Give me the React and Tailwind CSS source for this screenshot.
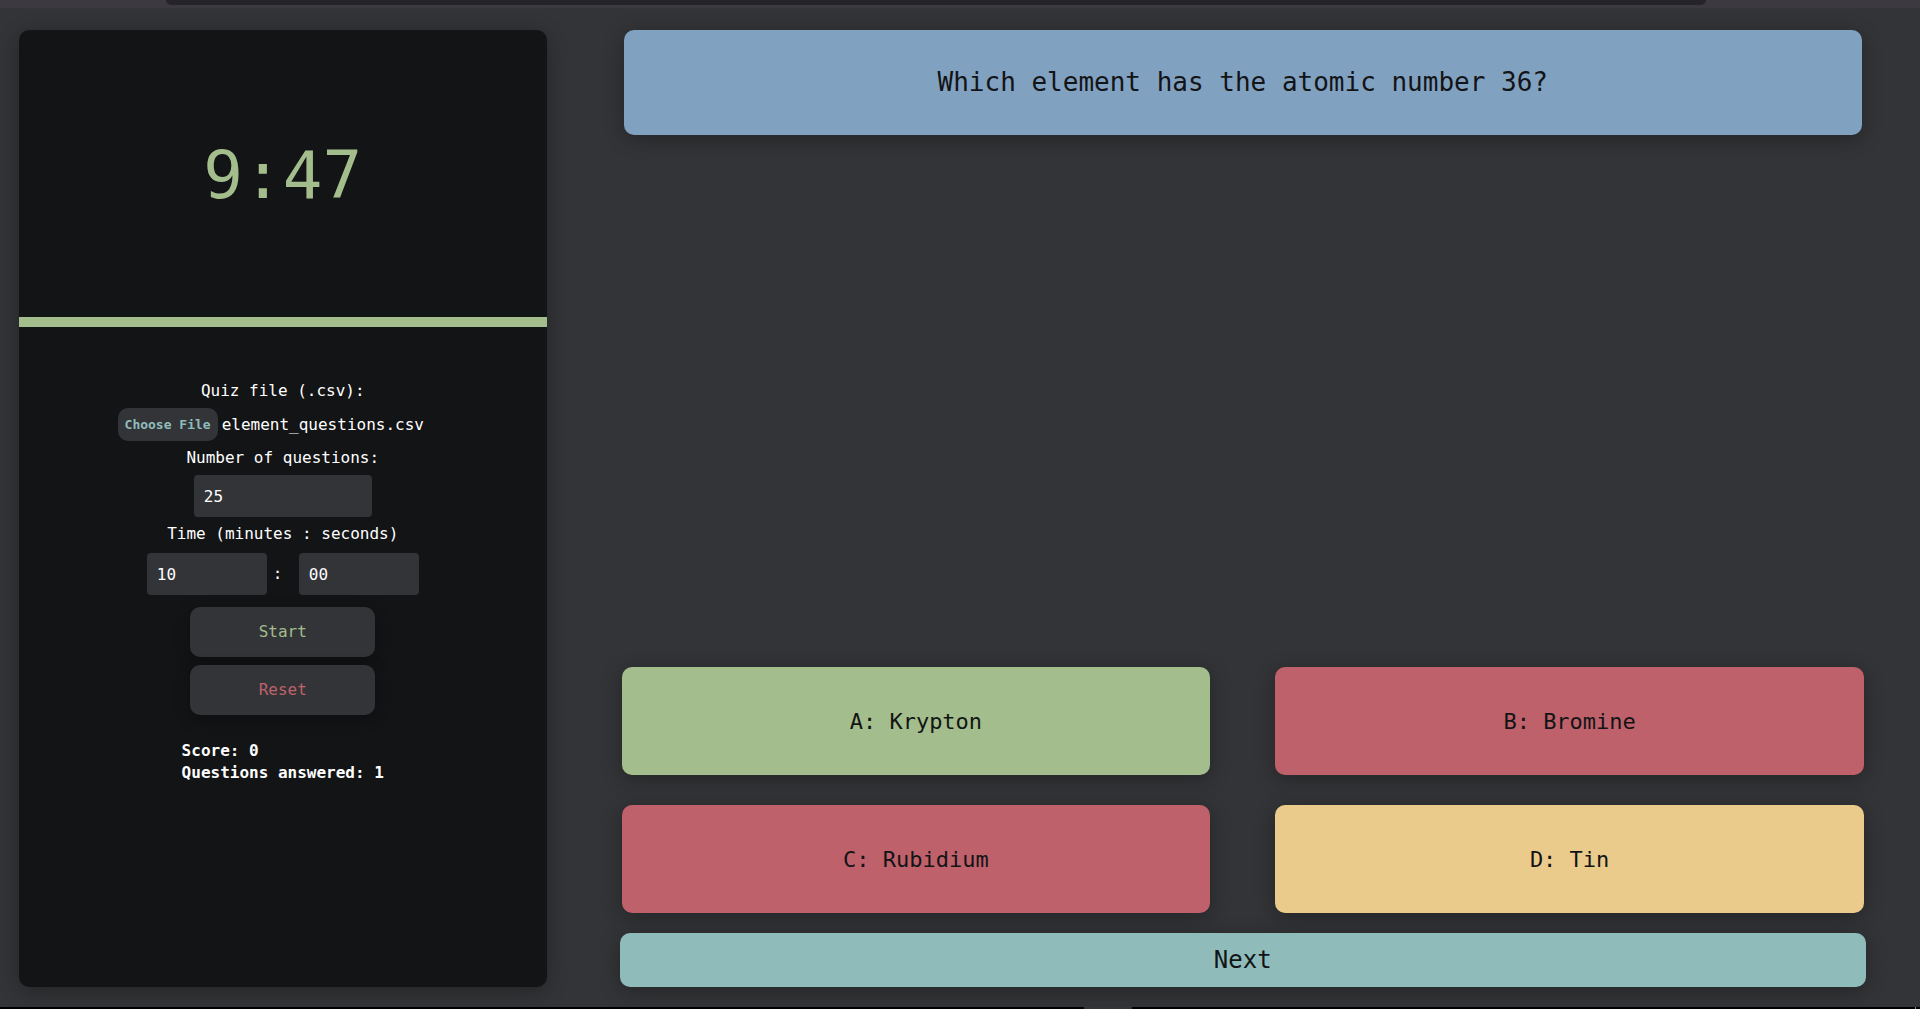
import { useRef, useState } from "react";

const answers = [
  { label: "A: Krypton", color: "bg-[#a3be8c]" },
  { label: "B: Bromine", color: "bg-[#bf616a]" },
  { label: "C: Rubidium", color: "bg-[#bf616a]" },
  { label: "D: Tin", color: "bg-[#ebcb8b]" },
];

function NumberField({ id, value, label, className }) {
  const [text, setText] = useState(value);
  return (
    <input
      id={id}
      type="text"
      inputMode="numeric"
      aria-label={label}
      value={text}
      onChange={(e) => setText(e.target.value)}
      className={`h-[42px] rounded bg-[#333437] px-[10px] text-white outline-none ${className}`}
    />
  );
}

function ControlButton({ children, className }) {
  return (
    <button
      type="button"
      className={`h-[50px] w-[185px] rounded-[10px] bg-[#333437] shadow-[0_4px_16px_rgba(0,0,0,0.3)] ${className}`}
    >
      {children}
    </button>
  );
}

function FilePicker() {
  const ref = useRef(null);
  const [name, setName] = useState("element_questions.csv");
  return (
    <div className="flex items-center gap-1">
      <input
        ref={ref}
        id="quiz-file"
        type="file"
        accept=".csv"
        className="hidden"
        onChange={(e) => e.target.files[0] && setName(e.target.files[0].name)}
      />
      <button
        type="button"
        onClick={() => ref.current.click()}
        className="h-[33px] rounded-[10px] bg-[#333437] px-[7px] text-[13px] font-bold text-[#8fbcbb]"
      >
        Choose File
      </button>
      <span>{name}</span>
    </div>
  );
}

function Sidebar() {
  return (
    <aside className="flex w-[27.75%] shrink-0 flex-col overflow-hidden rounded-[10px] bg-[#131416] text-white shadow-[0_4px_20px_rgba(0,0,0,0.3)]">
      <div className="flex h-[30%] items-center justify-center pt-1 text-[66px] text-[#a3be8c]">
        <time>9:47</time>
      </div>
      <div className="h-[10px] bg-[#a3be8c]" />
      <form className="mt-[52px] flex flex-col items-center text-base">
        <label htmlFor="quiz-file">Quiz file (.csv):</label>
        <div className="mt-[5px] pr-6">
          <FilePicker />
        </div>
        <label htmlFor="count" className="mt-[5px]">Number of questions:</label>
        <NumberField id="count" value="25" label="Number of questions" className="mt-[5px] w-[178px]" />
        <label htmlFor="minutes" className="mt-[5px]">Time (minutes : seconds)</label>
        <div className="mt-[7px] flex items-center">
          <NumberField id="minutes" value="10" label="Minutes" className="w-[120px]" />
          <span className="w-8 pl-[6px]">:</span>
          <NumberField id="seconds" value="00" label="Seconds" className="w-[120px]" />
        </div>
        <div className="mt-3 flex flex-col gap-2">
          <ControlButton className="text-[#a3be8c]">Start</ControlButton>
          <ControlButton className="text-[#bf616a]">Reset</ControlButton>
        </div>
        <div className="mt-[25px] font-bold leading-[22px]">
          <p>Score: 0</p>
          <p>Questions answered: 1</p>
        </div>
      </form>
    </aside>
  );
}

export default function App() {
  return (
    <div className="flex min-h-screen flex-col bg-[#333437] font-['DejaVu_Sans_Mono',monospace]">
      <div className="flex h-[9px] border-b border-[#363438] bg-[#3c3a40] pr-[214px] pl-[166px]">
        <div className="h-[5px] flex-1 rounded-b-lg bg-[#25242a]" />
      </div>
      <div className="flex grow pt-[21px] pb-5 pl-[19px]">
        <Sidebar />
        <main className="flex grow flex-col pr-[54px] pl-[73px] text-[#131416]">
          <h1 className="mx-1 flex h-[105px] items-center justify-center rounded-[10px] bg-[#81a1c1] text-[26px] shadow-[0_4px_20px_rgba(0,0,0,0.3)]">
            Which element has the atomic number 36?
          </h1>
          <div className="mx-[2px] mt-auto grid grid-cols-2 gap-x-[65px] gap-y-[30px]">
            {answers.map((a) => (
              <button
                key={a.label}
                type="button"
                className={`h-[108px] rounded-[10px] text-[22px] shadow-[0_4px_20px_rgba(0,0,0,0.3)] ${a.color}`}
              >
                {a.label}
              </button>
            ))}
          </div>
          <button
            type="button"
            className="mt-5 h-[54px] rounded-[10px] bg-[#8fbcbb] text-2xl shadow-[0_4px_20px_rgba(0,0,0,0.3)]"
          >
            Next
          </button>
        </main>
      </div>
      <div className="flex h-[2px] justify-between bg-black pr-1 pl-[1084px]">
        <div className="w-12 bg-[#333437]" />
        <div className="w-px bg-[#8a8a8a]" />
      </div>
    </div>
  );
}
